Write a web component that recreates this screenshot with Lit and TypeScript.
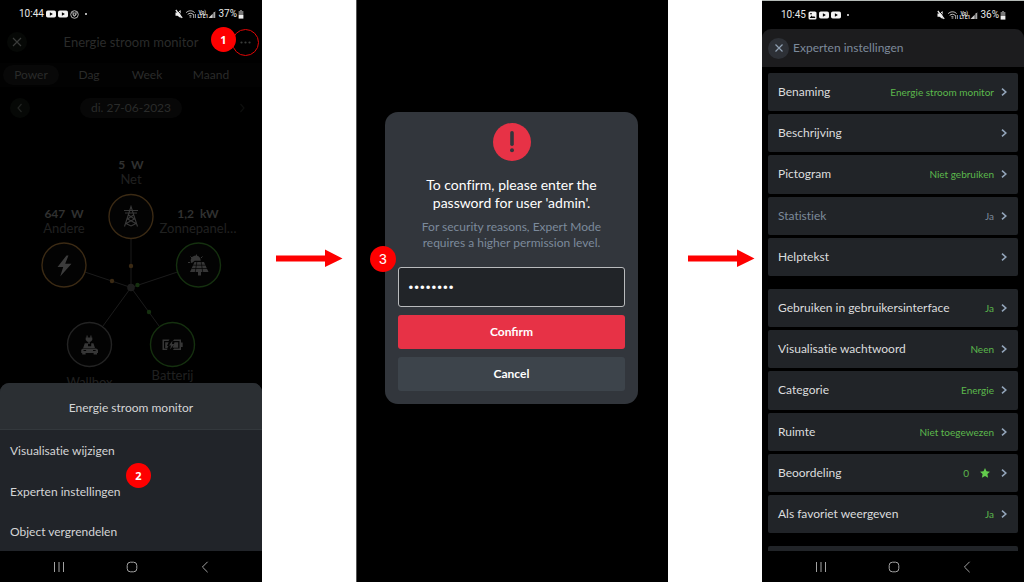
import { LitElement, html, css, svg, nothing } from "lit";
import { customElement, property } from "lit/decorators.js";

const youtube = html`<svg class="yt" viewBox="0 0 10 8" aria-hidden="true">
  <rect x="0" y="0.5" width="10" height="7" rx="1.8" fill="#f2f2f2" /><path d="M3.9 2.3 6.9 4 3.9 5.7z" fill="#000" />
</svg>`;

@customElement("status-bar")
class StatusBar extends LitElement {
  @property() time = "";
  @property() battery = "";
  @property({ type: Boolean }) picture = false;

  static styles = css`
    :host { display: flex; align-items: center; justify-content: space-between; height: 28px; padding: 0 18px 0 19px; color: #e8e8e8; font: 10px/12px Roboto, sans-serif; }
    .side { display: flex; align-items: center; gap: 2px; }
    .side svg { display: block; flex: none; }
    .yt { width: 10px; height: 8px; }
    .small { width: 9px; height: 9px; }
    .dot { width: 2px; height: 2px; margin-left: 4px; border-radius: 50%; background: #e8e8e8; }
    .signals { width: 42px; height: 12px; }
    .right { gap: 1px; }
    .battery { width: 6px; height: 9px; }
  `;

  render() {
    return html`
      <div class="side">
        <span>${this.time}</span>
        ${this.picture
          ? html`<svg class="small" viewBox="0 0 9 9"><rect x="0.5" y="0.5" width="8" height="8" rx="1.6" fill="#f2f2f2" /><path d="M1.6 7 3.6 4.4 5 6l1-1 1.5 2z" fill="#000" /><path d="M2 2.2h2v1H2z" fill="#000" /></svg>`
          : nothing}
        ${youtube}${youtube}
        ${this.picture
          ? nothing
          : html`<svg class="small" viewBox="0 0 9 9" fill="none" stroke="#ddd" stroke-width="0.8"><circle cx="4.5" cy="4.5" r="3.8" /><path d="M1.8 3.4 3.6 2.2M5.4 2.200 7.200 3.400M2.600 4.800 4.300 6.400 6.600 4.200" /><circle cx="4.500" cy="4.200" r="1.200" /></svg>`}
        <span class="dot"></span>
      </div>
      <div class="side right">
        <svg class="signals" viewBox="0 0 42 12" aria-label="Status">
          <path d="M0.5 4.4h2L5.6 2v8L2.5 7.8h-2z" fill="#eee" />
          <path d="M1.6 1.200 7.800 8.600" stroke="#000" stroke-width="1" /><path d="M0.800 2 7.200 9.800" stroke="#eee" stroke-width="1.200" />
          <g fill="none" stroke="#ccc" stroke-width="1"><path d="M11.2 4.600c2.600-2.400 6-2.400 8.400 0M12.700 6.400c1.700-1.500 3.800-1.500 5.400 0M14.200 8c.8-.7 1.700-.7 2.400 0" /></g>
          <path d="M15.4 8.2 16.6 9.600 14.400 9.600z" fill="#ccc" /><path d="M18.600 6v4M20.400 6v4" stroke="#ccc" stroke-width="0.8" />
          <text x="23.400" y="5.600" font-size="5" font-weight="700" fill="#ddd">Vo)</text>
          <text x="22.400" y="10.400" font-size="5" font-weight="700" fill="#ddd">LTE1</text>
          <path d="M33.500 10 40.500 3v7z" fill="#555" /><path d="M33.500 10 37.500 6v4z" fill="#ccc" /><path d="M39.200 4v6" stroke="#ccc" stroke-width="1" />
        </svg>
        <span>${this.battery}</span>
        <svg class="battery" viewBox="0 0 6 9"><path d="M2 0h2v1h1.4v4H.6V1H2z" fill="#777" /><path d="M.6 5h4.8v3.6H.6z" fill="#eee" /></svg>
      </div>`;
  }
}

@customElement("nav-bar")
class NavBar extends LitElement {
  static styles = css`
    :host { display: grid; grid-template-columns: repeat(3, 1fr); height: 31px; padding: 0 20px 0 22px; background: #000; }
    button { display: grid; place-items: center; margin: 0; padding: 0; border: 0; background: none; }
    svg { width: 12px; height: 12px; fill: none; stroke: #a2a2a2; stroke-width: 1; }
  `;
  render() {
    return html`
      <button aria-label="Recent"><svg viewBox="0 0 12 12"><path d="M1.5 1v10M6 1v10M10.5 1v10" /></svg></button>
      <button aria-label="Home"><svg viewBox="0 0 12 12"><rect x="1.2" y="1.2" width="9.6" height="9.6" rx="3.2" /></svg></button>
      <button aria-label="Terug"><svg viewBox="0 0 12 12"><path d="M8.6 0.8 3.4 6l5.2 5.2" /></svg></button>`;
  }
}

interface Flow {
  x: number;
  y: number;
  tone: string;
  dot?: [number, number];
}

const ORANGE = "#3b2a14";
const GREEN = "#15300f";
const GREY = "#232323";

const flows: Flow[] = [
  { x: 131, y: 216.5, tone: ORANGE, dot: [131, 266] },
  { x: 64, y: 265, tone: ORANGE, dot: [112, 281] },
  { x: 198.5, y: 265, tone: GREEN, dot: [137.5, 285] },
  { x: 89.5, y: 344.5, tone: GREY },
  { x: 172.5, y: 344.5, tone: GREEN, dot: [149, 312] },
];

@customElement("energy-phone")
class EnergyPhone extends LitElement {
  static styles = css`
    :host { position: relative; display: flex; flex-direction: column; min-width: 0; background: #000; font-family: Lato, "Open Sans", sans-serif; font-size: 12px; line-height: 16px; font-variant-ligatures: none; color: #2a2b2a; }
    button { margin: 0; padding: 0; border: 0; background: none; color: inherit; font: inherit; font-variant-ligatures: none; }
    .header { display: grid; grid-template-columns: 28px 1fr 28px; align-items: center; height: 28px; padding: 0 3px; }
    .title { font-size: 13px; text-align: center; }
    .round { display: grid; place-items: center; justify-self: center; width: 20px; height: 20px; border-radius: 50%; background: #060806; }
    .round svg { width: 10px; height: 10px; fill: none; stroke: #3a3c3a; stroke-width: 1.2; }
    .plain { background: none; }
    .more { display: grid; place-items: center; justify-self: end; width: 27px; height: 27px; border: 1px solid #e00606; border-radius: 50%; }
    .more svg { width: 11px; height: 3px; fill: #3a3c3a; }
    .tabs { display: grid; grid-template-columns: 56fr 60fr 56fr 72fr; align-items: center; height: 24px; margin-top: 7px; padding: 0 15px 0 3px; background: #020202; }
    .tab { height: 20px; border-radius: 10px; }
    .tab.on { background: #080808; }
    .dates { display: grid; grid-template-columns: 28px 1fr 28px; align-items: center; height: 20px; margin-top: 11px; padding: 0 6px; }
    .date { justify-self: center; width: 102px; height: 20px; border-radius: 10px; background: #070707; }
    .dates svg { stroke: #222422; }
    .faint { opacity: 0.4; }
    .diagram { display: block; width: 100%; }
    .diagram text { text-anchor: middle; font-family: Lato, sans-serif; font-size: 13px; fill: #202120; }
    .diagram .value { font-size: 12px; font-weight: 700; fill: #303130; white-space: pre; }
    .sheet { margin-top: auto; border-radius: 9px 9px 0 0; background: #212429; color: #d4d5d6; overflow: hidden; }
    .sheet-title { margin: 0; padding: 17px 0 13px; border-bottom: 1px solid #33383c; background: #2b2f33; font: inherit; font-variant-ligatures: none; text-align: center; }
    .item { display: block; width: 100%; height: 41px; padding: 0 10px; text-align: left; }
    .item:last-child { height: 39px; }
    .badge { position: absolute; display: grid; place-items: center; width: 25px; height: 25px; border-radius: 50%; background: #fe0000; color: #fff; font: 700 11px/14px "Noto Sans", sans-serif; }
    .one { top: 27px; right: 26px; }
    .two { bottom: 94px; left: 126px; }
  `;

  render() {
    return html`
      <status-bar time="10:44" battery="37%"></status-bar>
      <div class="header">
        <button class="round" aria-label="Sluiten"><svg viewBox="0 0 10 10"><path d="M1 1 9 9M9 1 1 9" /></svg></button>
        <span class="title">Energie stroom monitor</span>
        <button class="more" aria-label="Meer"><svg viewBox="0 0 11 3"><circle cx="1.5" cy="1.5" r="1.1" /><circle cx="5.5" cy="1.5" r="1.1" /><circle cx="9.5" cy="1.5" r="1.1" /></svg></button>
      </div>
      <div class="tabs">
        <button class="tab on">Power</button><button class="tab">Dag</button><button class="tab">Week</button><button class="tab">Maand</button>
      </div>
      <div class="dates">
        <button class="round" aria-label="Vorige"><svg viewBox="0 0 10 10"><path d="M6.5 1 3 5l3.5 4" /></svg></button>
        <button class="date">di. 27-06-2023</button>
        <button class="round plain faint" aria-label="Volgende"><svg viewBox="0 0 10 10"><path d="M3.5 1 7 5 3.5 9" /></svg></button>
      </div>
      <svg class="diagram" viewBox="0 118 262 265" role="img" aria-label="Energie">
        ${flows.map((f) => svg`<path d="M131 287.5 ${f.x} ${f.y}" stroke="#1b1b1b" stroke-width="1" />`)}
        ${flows.map((f) => svg`<circle cx=${f.x} cy=${f.y} r="22" fill="#030303" stroke=${f.tone} stroke-width="1.4" />`)}
        ${flows.map((f) => (f.dot ? svg`<circle cx=${f.dot[0]} cy=${f.dot[1]} r="2.2" fill=${f.tone} />` : nothing))}
        <circle cx="131" cy="287.5" r="3.8" fill="#1d1d1d" />
        <text class="value" x="131" y="169">5  W</text><text x="131" y="184">Net</text>
        <text class="value" x="64" y="218">647  W</text><text x="64" y="233">Andere</text>
        <text class="value" x="198" y="218">1,2  kW</text><text x="198" y="233">Zonnepanel…</text>
        <text x="89.5" y="387">Wallbox</text><text x="172.5" y="380">Batterij</text>
        <g fill="none" stroke="#393939" stroke-width="1.1">
          <path d="M124.500 226.500 131 206.500l6.500 20M124 210.500h14M125 213h12M128.500 215l6 4-8.500 4.500 5 2.500M133.500 215l-6 4 8.500 4.500-5 2.500" />
        </g>
        <path d="M66.500 255.500 57.500 267h5.700l-3 9.500 11.300-12.700h-6.300l3.300-8.300z" fill="#3c3c3c" />
        <g fill="#363636">
          <path d="M191.500 263.200a5 5 0 1 1 9.200-2.500h-6z" />
          <path d="M196.500 254.500v2M190.500 256.500l1.500 1.500M188 262.500h2.200M202.500 256.500l-1.500 1.500" stroke="#363636" />
          <path d="M194.500 262h9.500l4.500 10h-18.500z" />
          <path d="M191.500 268.500h16M192.800 265.200h13M196.800 262l-1.500 10M201.200 262l1.500 10" stroke="#030303" stroke-width="0.700" />
          <path d="M198 272h3v3.500h-3z" />
          <path d="M86.500 335.500h1.200v2h2.600v-2h1.200v2h.8v2.600l-1.600 1.600h-1v2.300h-1.400v-2.300h-1l-1.600-1.600v-2.600h.8z" />
          <path d="M84.800 343.300h3.200v3h3.200v-3h2.200l1.600 4.700h-11.800z" />
          <path d="M83 348.400h13.200l1.800 1.400v3.200h-16.800v-3.200z" />
          <path d="M82.200 353h3.400v1.600h-3.400zM93.600 353h3.400v1.600h-3.400z" />
          <path d="M83.500 350h2.600v1h-2.600zM93 350h2.600v1H93z" fill="#030303" />
          <path d="M162.500 339.500h7l-1 1.500h-4.500v7.500h3.500l-.5 1.500h-4.500zM174 339.500h7v3h1.700v4.500h-1.700v3h-8l1-1.500h5.500V341H173z" />
          <path d="M165.200 342.200h3.500l-1.700 3.500 1.500.8-1.200 1.600h-2.100zM174.500 342.200h3.700v5.500h-5.500z" />
          <path d="M172.500 340.500 169 345.500h2l-1 4 4.500-5.500h-2.500z" />
        </g>
      </svg>
      <div class="sheet">
        <h2 class="sheet-title">Energie stroom monitor</h2>
        <button class="item">Visualisatie wijzigen</button>
        <button class="item">Experten instellingen</button>
        <button class="item">Object vergrendelen</button>
      </div>
      <nav-bar></nav-bar>
      <span class="badge one">1</span>
      <span class="badge two">2</span>`;
  }
}

@customElement("password-phone")
class PasswordPhone extends LitElement {
  static styles = css`
    :host { display: block; box-sizing: border-box; min-width: 0; padding: 112px 30px 0 28px; border-left: 1px solid #555; background: #000; font-family: Lato, "Open Sans", sans-serif; font-variant-ligatures: none; }
    .dialog { position: relative; display: flex; flex-direction: column; padding: 11px 13px 13px; border-radius: 13px; background: #32363c; text-align: center; }
    .alert { align-self: center; width: 38px; height: 38px; }
    h2 { margin: 15px 0 0; color: #fff; font-weight: 400; font-size: 14px; line-height: 18px; }
    p { margin: 7px 0 0; color: #7c8a9b; font-size: 12px; line-height: 16px; }
    input { box-sizing: border-box; width: 100%; height: 40px; margin: 16px 0 8px; padding: 0 9px; border: 1px solid #b9bbbd; border-radius: 3px; outline: 0; background: #212428; color: #fff; font: 17px/20px Roboto, sans-serif; }
    button { height: 34px; margin: 0; padding: 0; border: 0; border-radius: 3px; background: #3d444b; color: #fff; font: 700 12px/16px Lato, sans-serif; }
    .confirm { margin-bottom: 8px; background: #e73246; }
    .badge { position: absolute; top: 134px; left: -15px; display: grid; place-items: center; width: 26px; height: 26px; border-radius: 50%; background: #fe0000; color: #fff; font: 14px/16px "Liberation Sans", sans-serif; }
  `;
  render() {
    return html`
      <form class="dialog" @submit=${(e: Event) => e.preventDefault()}>
        <svg class="alert" viewBox="0 0 38 38" aria-hidden="true">
          <circle cx="19" cy="19" r="19" fill="#e73246" /><path d="M19 9.800v11.500" stroke="#32363c" stroke-width="3.600" stroke-linecap="round" /><circle cx="19" cy="27.300" r="2" fill="#32363c" />
        </svg>
        <h2>To confirm, please enter the<br />password for user 'admin'.</h2>
        <p>For security reasons, Expert Mode<br />requires a higher permission level.</p>
        <input type="password" aria-label="Password" .value=${"password"} />
        <button class="confirm" type="submit">Confirm</button>
        <button type="button">Cancel</button>
        <span class="badge">3</span>
      </form>`;
  }
}

interface Setting {
  label: string;
  value?: string;
  muted?: boolean;
  star?: boolean;
  first?: boolean;
}

const settings: Setting[] = [
  { label: "Benaming", value: "Energie stroom monitor" },
  { label: "Beschrijving" },
  { label: "Pictogram", value: "Niet gebruiken" },
  { label: "Statistiek", value: "Ja", muted: true },
  { label: "Helptekst" },
  { label: "Gebruiken in gebruikersinterface", value: "Ja", first: true },
  { label: "Visualisatie wachtwoord", value: "Neen" },
  { label: "Categorie", value: "Energie" },
  { label: "Ruimte", value: "Niet toegewezen" },
  { label: "Beoordeling", value: "0", star: true },
  { label: "Als favoriet weergeven", value: "Ja" },
];

@customElement("settings-phone")
class SettingsPhone extends LitElement {
  static styles = css`
    :host { display: flex; flex-direction: column; box-sizing: border-box; min-width: 0; border-top: 1px solid #b4bab6; background: #000; font-family: Lato, "Open Sans", sans-serif; font-variant-ligatures: none; }
    button { margin: 0; border: 0; font: inherit; font-variant-ligatures: none; }
    .header { display: flex; align-items: center; gap: 4px; height: 38px; padding: 0 6px; border-radius: 9px 9px 0 0; background: #1c1c1e; color: #7c8a9b; font-size: 12px; line-height: 16px; }
    .header h1 { margin: 0; font: inherit; font-variant-ligatures: none; }
    .close { display: grid; place-items: center; width: 21px; height: 21px; padding: 0; border-radius: 50%; background: #2d3036; }
    .close svg { width: 8px; height: 8px; fill: none; stroke: #8f9fb2; stroke-width: 1.2; }
    .list { display: flex; flex: 1; flex-direction: column; gap: 3px; padding: 6px 6px 0; }
    .row { display: flex; flex: 1 0 38px; align-items: center; gap: 7px; padding: 0 11px 0 10px; border-radius: 2px; background: #212428; color: #dcddde; text-align: left; font-size: 12px; line-height: 16px; }
    .row.first { margin-top: 10px; }
    .label { flex: 1; }
    .value { color: #5cb84c; font-size: 10px; }
    .row.muted, .row.muted .value { color: #7c8a9b; }
    .chevron { width: 6px; height: 8px; fill: none; stroke: #93a5ba; stroke-width: 1.6; }
    .star { width: 10px; height: 10px; margin: 0 4px; fill: #62cc4c; }
    .next { height: 5px; margin-top: 10px; border-radius: 2px 2px 0 0; background: #212428; }
  `;
  render() {
    return html`
      <status-bar time="10:45" battery="36%" picture></status-bar>
      <div class="header">
        <button class="close" aria-label="Sluiten"><svg viewBox="0 0 8 8"><path d="M.5 .5 7.500 7.500M7.500 .5 .5 7.500" /></svg></button>
        <h1>Experten instellingen</h1>
      </div>
      <div class="list">
        ${settings.map(
          (s) => html`<button class="row ${s.muted ? "muted" : ""} ${s.first ? "first" : ""}">
            <span class="label">${s.label}</span>
            ${s.value ? html`<span class="value">${s.value}</span>` : nothing}
            ${s.star ? html`<svg class="star" viewBox="0 0 10 10"><path d="M5 0 6.500 3.300 10 3.700 7.400 6.100 8.100 9.700 5 7.900 1.900 9.700 2.600 6.100 0 3.700 3.500 3.300z" /></svg>` : nothing}
            <svg class="chevron" viewBox="0 0 6 8"><path d="M1 .6 4.800 4 1 7.400" /></svg>
          </button>`
        )}
        <div class="next"></div>
      </div>
      <nav-bar></nav-bar>`;
  }
}

@customElement("app-root")
class AppRoot extends LitElement {
  static styles = css`
    :host { display: grid; grid-template-columns: 262fr 94fr 312fr 94fr 262fr; box-sizing: border-box; min-height: 100vh; padding-bottom: 1px; background: #fff; }
    .step { display: flex; align-items: start; justify-content: center; padding-top: 249px; }
    .step.last { padding-left: 12px; }
    .step svg { width: 67px; height: 18px; fill: #fe0000; }
  `;
  render() {
    const arrow = html`<svg viewBox="0 0 67 18" aria-hidden="true"><path d="M0 6.500h49V0.500L66.500 9.500 49 18v-5.500H0z" /></svg>`;
    return html`
      <energy-phone></energy-phone>
      <div class="step">${arrow}</div>
      <password-phone></password-phone>
      <div class="step last">${arrow}</div>
      <settings-phone></settings-phone>`;
  }
}
